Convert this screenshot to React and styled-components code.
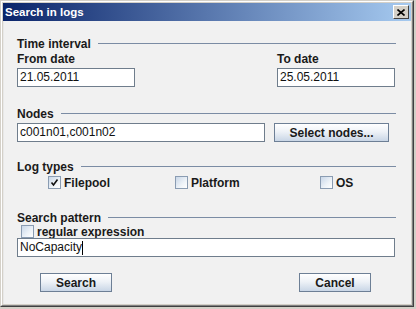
import styled, { createGlobalStyle } from "styled-components";

const GlobalStyle = createGlobalStyle`
  html, body {
    margin: 0;
    padding: 0;
    background: #d4d0c8;
  }
  body {
    font-family: "Liberation Sans", Arial, sans-serif;
  }
`;

const Frame = styled.div`
  width: 414px;
  height: 307px;
  box-sizing: border-box;
  border-top: 1px solid #d4d0c8;
  border-left: 1px solid #d4d0c8;
  border-right: 1px solid #404040;
  border-bottom: 1px solid #404040;
  display: flex;
  flex-direction: column;
`;

const Inner = styled.div`
  flex: 1;
  display: flex;
  flex-direction: column;
  border-top: 1px solid #ffffff;
  border-left: 1px solid #ffffff;
  border-right: 1px solid #808080;
  border-bottom: 1px solid #808080;
  background: #d4d0c8;
  padding: 1px;
`;

const TitleBar = styled.div`
  height: 18px;
  display: flex;
  align-items: center;
  justify-content: space-between;
  padding: 0 2px 0 2px;
  background: linear-gradient(to right, #0a246a, #a6caf0);
`;

const TitleText = styled.span`
  color: #ffffff;
  font-weight: bold;
  font-size: 11.5px;
`;

const CloseButton = styled.div`
  width: 16px;
  height: 14px;
  box-sizing: border-box;
  background: #d4d0c8;
  border-top: 1px solid #ffffff;
  border-left: 1px solid #ffffff;
  border-right: 1px solid #404040;
  border-bottom: 1px solid #404040;
  display: flex;
  align-items: center;
  justify-content: center;
`;

const Content = styled.div`
  flex: 1;
  background: #f1f1f1;
  border-left: 1px solid #e8e8e8;
  padding: 15px 15px 0 13px;
  display: flex;
  flex-direction: column;
`;

const Header = styled.div`
  height: 15px;
  display: flex;
  align-items: center;
  gap: 7px;
  margin-top: ${(p) => p.$top || 0}px;
  font-weight: bold;
  font-size: 12px;
  color: #1a1a1a;
`;

const Rule = styled.div`
  flex: 1;
  height: 1px;
  background: #7b8ca4;
`;

const DateGrid = styled.div`
  display: grid;
  grid-template-columns: 260px 118px;
`;

const DateCol = styled.div`
  display: flex;
  flex-direction: column;
`;

const FieldLabel = styled.div`
  height: 17px;
  line-height: 16px;
  font-weight: bold;
  font-size: 12px;
  color: #1a1a1a;
`;

const Field = styled.div`
  width: ${(p) => p.$width}px;
  height: 19px;
  box-sizing: border-box;
  border: 1px solid #6f7d8c;
  background: #ffffff;
  font-size: 12px;
  line-height: 17px;
  padding-left: 2px;
  color: #111;
  display: flex;
  align-items: center;
`;

const Caret = styled.span`
  display: inline-block;
  width: 1px;
  height: 14px;
  background: #000;
`;

const Row = styled.div`
  display: flex;
  align-items: center;
  gap: ${(p) => p.$gap || 0}px;
  margin-top: ${(p) => p.$top || 0}px;
  padding-left: ${(p) => p.$left || 0}px;
`;

const Button = styled.div`
  width: ${(p) => p.$width}px;
  height: 19px;
  box-sizing: border-box;
  border: 1px solid #6d7f95;
  background: linear-gradient(to bottom, #ffffff 0%, #eef2f7 45%, #c9d6e6 100%);
  display: flex;
  align-items: center;
  justify-content: center;
  font-weight: bold;
  font-size: 12px;
  color: #1a1a1a;
`;

const Check = styled.label`
  width: ${(p) => (p.$width ? `${p.$width}px` : "auto")};
  display: flex;
  align-items: center;
  gap: 3px;
  height: ${(p) => p.$height || 15}px;
  font-weight: bold;
  font-size: 12px;
  color: #1a1a1a;
`;

const Box = styled.span`
  width: 13px;
  height: 13px;
  box-sizing: border-box;
  border: 1px solid #8a9cb2;
  background: linear-gradient(135deg, #c9d7e8 0%, #eef3f8 60%, #ffffff 100%);
  display: flex;
  align-items: center;
  justify-content: center;
`;

const ButtonRow = styled.div`
  display: flex;
  justify-content: space-between;
  padding: 0 25px 0 23px;
  margin-top: 16px;
`;

function CheckBox({ label, checked, width, height }) {
  return (
    <Check $width={width} $height={height}>
      <Box>
        {checked && (
          <svg width="9" height="9" viewBox="0 0 9 9">
            <path d="M1.5 4.5 L3.5 7 L7.5 1.5" stroke="#111" strokeWidth="1.6" fill="none" />
          </svg>
        )}
      </Box>
      {label}
    </Check>
  );
}

export default function App() {
  return (
    <>
      <GlobalStyle />
      <Frame>
        <Inner>
          <TitleBar>
            <TitleText>Search in logs</TitleText>
            <CloseButton>
              <svg width="8" height="7" viewBox="0 0 8 7">
                <path d="M0.5 0.5 L7.5 6.5 M7.5 0.5 L0.5 6.5" stroke="#000" strokeWidth="1.6" />
              </svg>
            </CloseButton>
          </TitleBar>
          <Content>
            <Header>
              Time interval
              <Rule />
            </Header>
            <DateGrid>
              <DateCol>
                <FieldLabel>From date</FieldLabel>
                <Field $width={118}>21.05.2011</Field>
              </DateCol>
              <DateCol>
                <FieldLabel>To date</FieldLabel>
                <Field $width={118}>25.05.2011</Field>
              </DateCol>
            </DateGrid>

            <Header $top={19}>
              Nodes
              <Rule />
            </Header>
            <Row $top={2} $gap={9}>
              <Field $width={248}>c001n01,c001n02</Field>
              <Button $width={115}>Select nodes...</Button>
            </Row>

            <Header $top={17}>
              Log types
              <Rule />
            </Header>
            <Row $top={1} $left={31}>
              <CheckBox label="Filepool" checked width={127} />
              <CheckBox label="Platform" width={145} />
              <CheckBox label="OS" />
            </Row>

            <Header $top={20}>
              Search pattern
              <Rule />
            </Header>
            <Row $left={4}>
              <CheckBox label="regular expression" height={13} />
            </Row>
            <Field $width={378}>
              NoCapacity
              <Caret />
            </Field>

            <ButtonRow>
              <Button $width={72}>Search</Button>
              <Button $width={72}>Cancel</Button>
            </ButtonRow>
          </Content>
        </Inner>
      </Frame>
    </>
  );
}
